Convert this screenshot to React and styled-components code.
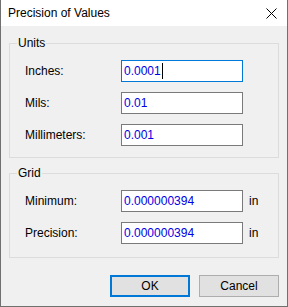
import styled, { createGlobalStyle } from "styled-components";

const GlobalStyle = createGlobalStyle`
  html, body {
    margin: 0;
    padding: 0;
    background: #f0f0f0;
  }
  * {
    box-sizing: border-box;
  }
`;

const units = [
  { label: "Inches:", value: "0.0001", focused: true },
  { label: "Mils:", value: "0.01" },
  { label: "Millimeters:", value: "0.001" },
];

const grid = [
  { label: "Minimum:", value: "0.000000394" },
  { label: "Precision:", value: "0.000000394" },
];

function App() {
  return (
    <>
      <GlobalStyle />
      <Window>
        <TitleBar>
          <Title>Precision of Values</Title>
          <CloseButton aria-label="Close">
            <svg width="11" height="11" viewBox="0 0 11 11">
              <path d="M0.5 0.5 L10.5 10.5 M10.5 0.5 L0.5 10.5" stroke="#000" strokeWidth="1" />
            </svg>
          </CloseButton>
        </TitleBar>
        <Body>
          <Group $top={9}>
            <Legend>Units</Legend>
            <Rows>
              {units.map((row) => (
                <Row key={row.label}>
                  <Label>{row.label}</Label>
                  <TextBox $focused={row.focused}>
                    {row.value}
                    {row.focused && <Caret />}
                  </TextBox>
                </Row>
              ))}
            </Rows>
          </Group>
          <Group $top={9} $bottom={13}>
            <Legend>Grid</Legend>
            <Rows>
              {grid.map((row) => (
                <Row key={row.label}>
                  <Label>{row.label}</Label>
                  <TextBox>{row.value}</TextBox>
                  <Suffix>in</Suffix>
                </Row>
              ))}
            </Rows>
          </Group>
          <ButtonBar>
            <Button $primary>OK</Button>
            <Button>Cancel</Button>
          </ButtonBar>
        </Body>
      </Window>
    </>
  );
}

export default App;

const Window = styled.div`
  width: 288px;
  height: 307px;
  display: flex;
  flex-direction: column;
  border: 1px solid #707070;
  border-top: none;
  background: #f0f0f0;
  font-family: "Liberation Sans", Arial, sans-serif;
  font-size: 12px;
  color: #000;
`;

const TitleBar = styled.div`
  height: 26px;
  flex-shrink: 0;
  display: flex;
  align-items: center;
  justify-content: space-between;
  padding: 0 10px 0 7px;
  background: #fff;
`;

const Title = styled.div`
  font-size: 12px;
  padding-bottom: 1px;
`;

const CloseButton = styled.div`
  width: 11px;
  height: 11px;
  display: flex;
  margin-top: 1px;
`;

const Body = styled.div`
  flex: 1;
  display: flex;
  flex-direction: column;
  padding: 9px 8px 0 8px;
`;

const Group = styled.fieldset`
  margin: 0 0 7px 0;
  padding: ${(p) => p.$top}px 15px ${(p) => p.$bottom ?? 11}px 15px;
  border: 1px solid #dcdcdc;
  min-width: 0;
`;

const Legend = styled.legend`
  margin-left: 6px;
  padding: 0 1px;
  font-size: 12px;
  line-height: 16px;
  margin-inline-start: -8px;
`;

const Rows = styled.div`
  display: flex;
  flex-direction: column;
  gap: 10px;
`;

const Row = styled.div`
  display: grid;
  grid-template-columns: 96px 122px auto;
  align-items: center;
  height: 22px;
`;

const Label = styled.span`
  line-height: 16px;
`;

const TextBox = styled.div`
  height: 22px;
  display: flex;
  align-items: center;
  padding: 0 2px;
  background: #fff;
  border: 1px solid ${(p) => (p.$focused ? "#0078d7" : "#7a7a7a")};
  color: #0000e6;
  white-space: nowrap;
`;

const Caret = styled.span`
  display: inline-block;
  width: 1px;
  height: 16px;
  margin-left: 1px;
  background: #000;
`;

const Suffix = styled.span`
  padding-left: 6px;
`;

const ButtonBar = styled.div`
  display: flex;
  justify-content: flex-end;
  gap: 9px;
  margin-top: 10px;
`;

const Button = styled.div`
  width: 80px;
  height: 22px;
  display: flex;
  align-items: center;
  justify-content: center;
  background: #e1e1e1;
  border: ${(p) => (p.$primary ? "2px solid #0078d7" : "1px solid #adadad")};
  color: #000;
`;
